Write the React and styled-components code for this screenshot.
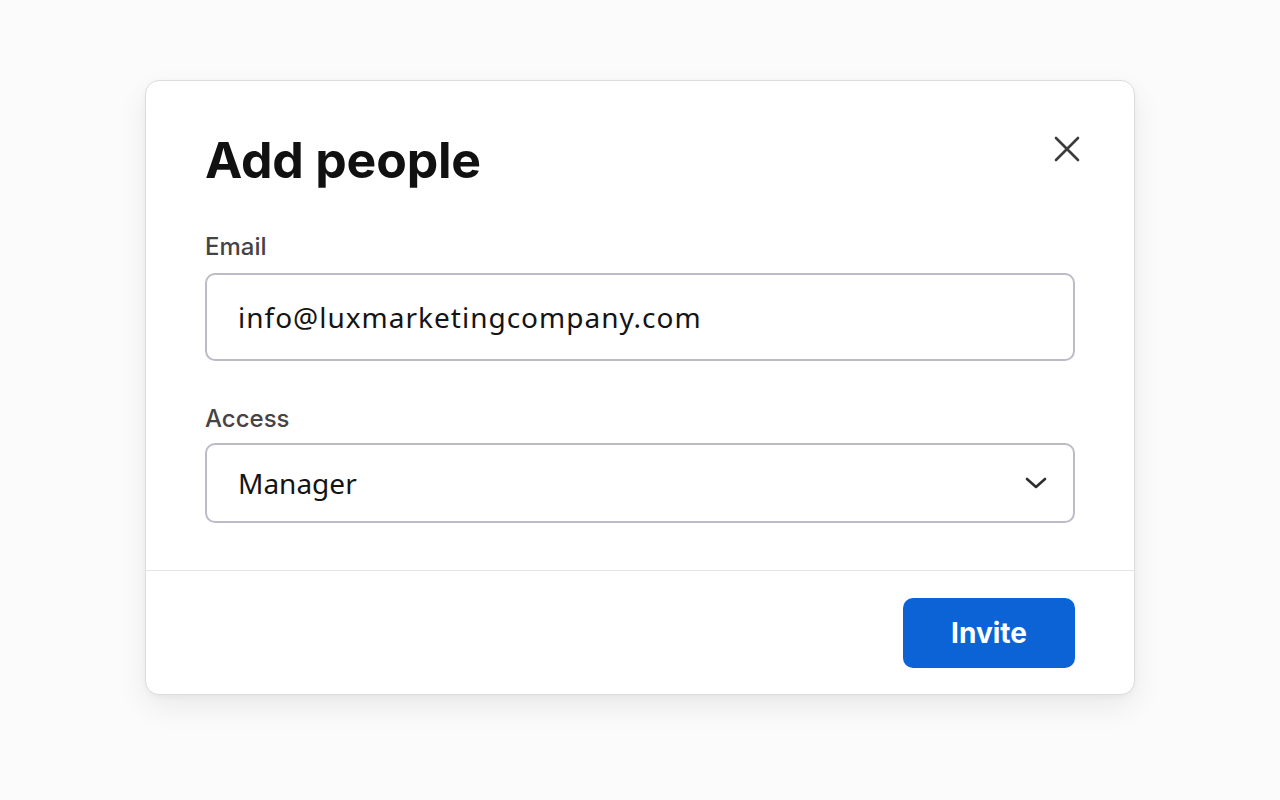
import styled, { createGlobalStyle } from "styled-components";

const GlobalStyle = createGlobalStyle`
  html, body {
    margin: 0;
    padding: 0;
    background: #fbfbfb;
  }
  body {
    font-family: Inter, "Noto Sans", sans-serif;
  }
`;

const Page = styled.div`
  min-height: 800px;
  display: flex;
  justify-content: center;
  align-items: flex-start;
  padding-top: 80px;
  box-sizing: border-box;
`;

const Card = styled.div`
  width: 990px;
  box-sizing: border-box;
  background: #fff;
  border: 1px solid #dcdcdf;
  border-radius: 14px;
  box-shadow: 0 12px 30px rgba(0, 0, 0, 0.07), 0 2px 6px rgba(0, 0, 0, 0.04);
`;

const Body = styled.div`
  padding: 49px 59px 47px;
`;

const Header = styled.div`
  display: flex;
  justify-content: space-between;
  align-items: flex-start;
  margin-bottom: 42px;
`;

const Title = styled.h1`
  margin: 0;
  font-family: Inter, sans-serif;
  font-size: 50px;
  line-height: 60px;
  font-weight: 700;
  color: #111;
  letter-spacing: -0.2px;
`;

const CloseButton = styled.button`
  width: 28px;
  height: 28px;
  margin-top: 5px;
  margin-right: -6px;
  padding: 0;
  border: none;
  background: none;
  cursor: pointer;
  display: flex;
  align-items: center;
  justify-content: center;
  color: #3c3c3e;
`;

const Field = styled.div`
  display: flex;
  flex-direction: column;
  gap: ${(p) => p.$inner || 12}px;
  margin-bottom: ${(p) => p.$gap || 0}px;
`;

const Label = styled.label`
  font-family: Inter, sans-serif;
  font-size: 24px;
  line-height: 29px;
  font-weight: 500;
  color: #444446;
`;

const Box = styled.div`
  height: ${(p) => p.$h}px;
  box-sizing: border-box;
  border: 2px solid #bcbcc8;
  border-radius: 10px;
  padding: 0 26px 0 31px;
  display: flex;
  align-items: center;
  justify-content: space-between;
  font-family: "Noto Sans", sans-serif;
  font-size: 28px;
  letter-spacing: ${(p) => p.$spacing || 0}px;
  color: #141414;
`;

const Footer = styled.div`
  border-top: 1px solid #e4e4e6;
  padding: 27px 59px 26px;
  display: flex;
  justify-content: flex-end;
`;

const InviteButton = styled.button`
  width: 172px;
  height: 70px;
  border: none;
  border-radius: 10px;
  background: #0b63d6;
  color: #fff;
  font-family: Inter, sans-serif;
  font-size: 28px;
  font-weight: 700;
  cursor: pointer;
`;

export default function App() {
  return (
    <>
      <GlobalStyle />
      <Page>
        <Card>
          <Body>
            <Header>
              <Title>Add people</Title>
              <CloseButton aria-label="Close">
                <svg width="28" height="28" viewBox="0 0 28 28" fill="none">
                  <path
                    d="M3 3 L25 25 M25 3 L3 25"
                    stroke="currentColor"
                    strokeWidth="2.6"
                    strokeLinecap="round"
                  />
                </svg>
              </CloseButton>
            </Header>
            <Field $gap={43}>
              <Label>Email</Label>
              <Box $h={88} $spacing={1}>info@luxmarketingcompany.com</Box>
            </Field>
            <Field $inner={10}>
              <Label>Access</Label>
              <Box $h={80}>
                Manager
                <svg width="22" height="14" viewBox="0 0 22 14" fill="none">
                  <path
                    d="M2 3 L11 11 L20 3"
                    stroke="#2e2e30"
                    strokeWidth="2.6"
                    strokeLinecap="round"
                    strokeLinejoin="round"
                  />
                </svg>
              </Box>
            </Field>
          </Body>
          <Footer>
            <InviteButton>Invite</InviteButton>
          </Footer>
        </Card>
      </Page>
    </>
  );
}
